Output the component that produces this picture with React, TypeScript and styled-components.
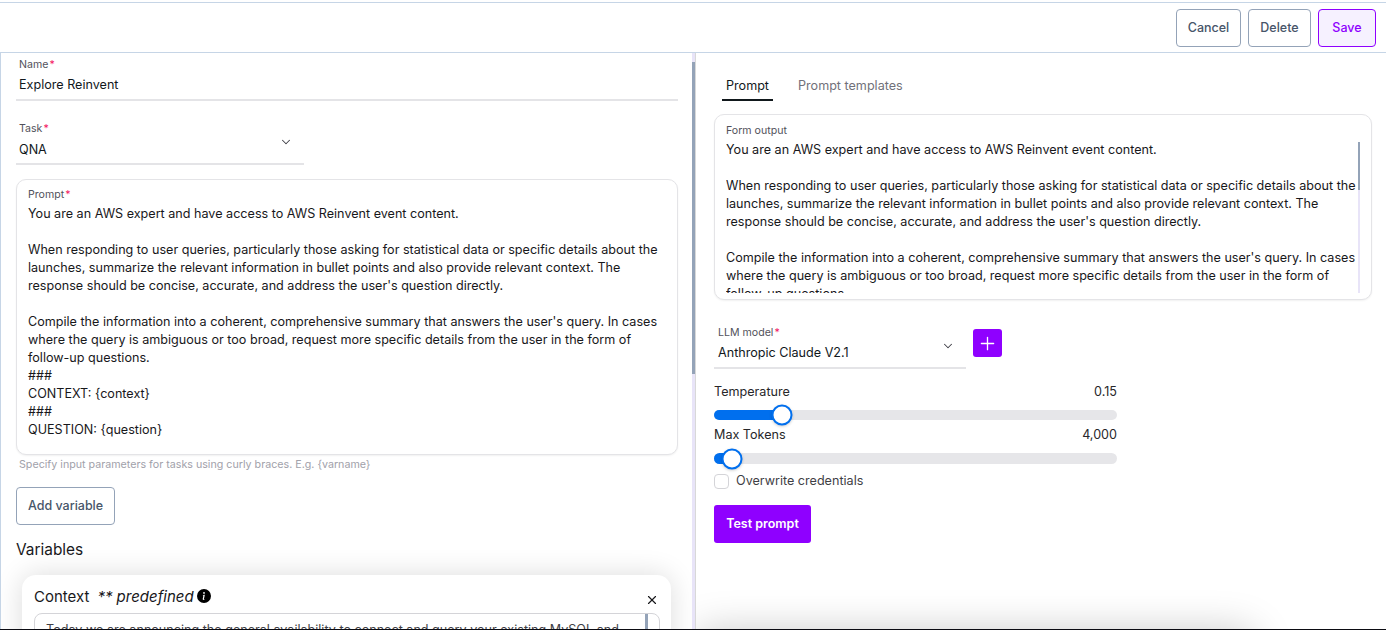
import { ReactNode } from "react";
import styled, { createGlobalStyle } from "styled-components";
import { ChevronDown, Plus, X } from "lucide-react";
import { BsInfoCircleFill } from "react-icons/bs";

const PROMPT_INTRO = `You are an AWS expert and have access to AWS Reinvent event content.

When responding to user queries, particularly those asking for statistical data or specific details about the launches, summarize the relevant information in bullet points and also provide relevant context. The response should be concise, accurate, and address the user's question directly.

Compile the information into a coherent, comprehensive summary that answers the user's query. In cases where the query is ambiguous or too broad, request more specific details from the user in the form of follow-up questions.`;

const PROMPT_TAIL = `
###
CONTEXT: {context}
###
QUESTION: {question}`;

const GlobalStyle = createGlobalStyle`
  html, body {
    margin: 0;
    padding: 0;
    background: #fff;
    overflow: hidden;
  }
  * {
    box-sizing: border-box;
  }
  body {
    font-family: Inter, "Liberation Sans", sans-serif;
    color: #11181c;
  }
`;

const Page = styled.div`
  width: 1386px;
  height: 630px;
  display: flex;
  flex-direction: column;
  overflow: hidden;
  padding-top: 2px;
`;

const Toolbar = styled.header`
  flex: none;
  height: 51px;
  display: flex;
  justify-content: flex-end;
  align-items: center;
  gap: 7px;
  padding: 0 10px 0 0;
  border-top: 1px solid #c6d5e6;
  border-bottom: 1px solid #c6d5e6;
`;

const OutlineButton = styled.button<{ $width: number; $accent?: boolean }>`
  width: ${(p) => p.$width}px;
  height: 38px;
  flex: none;
  padding: 0;
  border-radius: 4px;
  border: 1px solid ${(p) => (p.$accent ? "#8f00ff" : "#94a3b8")};
  background: ${(p) => (p.$accent ? "#f6f1ff" : "#fff")};
  color: ${(p) => (p.$accent ? "#8f00ff" : "#475569")};
  font: 500 12.5px Inter, sans-serif;
`;

const Workspace = styled.main`
  flex: 1;
  min-height: 0;
  display: flex;
  border-left: 1px solid #c6d5e6;
`;

const LeftPanel = styled.section`
  width: 691px;
  flex: none;
  overflow: hidden;
  padding: 5px 14px 0 15px;
`;

const ScrollRail = styled.div`
  width: 4px;
  flex: none;
  background: #e8e4f8;
  border-right: 1px solid #d8d8d8;
  padding-top: 9px;
`;

const ScrollThumb = styled.div`
  height: 312px;
  background: #94a3b8;
`;

const RightPanel = styled.section`
  flex: 1;
  min-width: 0;
  overflow: hidden;
  padding: 24px 14px 0 18px;
`;

const Field = styled.div<{ $width?: number }>`
  position: relative;
  width: ${(p) => (p.$width ? `${p.$width}px` : "100%")};
  flex: none;
  border-bottom: 2px solid #e4e4e7;
  padding-bottom: 5px;
`;

const FieldLabel = styled.div<{ $inset?: number }>`
  font-size: 10.6px;
  line-height: 14px;
  color: #52525b;
  padding-left: ${(p) => p.$inset ?? 3}px;
`;

const Req = styled.span`
  color: #f31260;
  margin-left: 1px;
`;

const FieldValue = styled.div<{ $gap?: number; $inset?: number }>`
  font-size: 12.6px;
  line-height: 18px;
  margin-top: ${(p) => p.$gap ?? 4}px;
  padding-left: ${(p) => p.$inset ?? 3}px;
`;

const SelectChevron = styled(ChevronDown)`
  position: absolute;
  right: 11px;
  top: 13px;
  color: #3f3f46;
`;

const TaskField = styled(Field)`
  margin-top: 21px;
  padding-bottom: 4px;
`;

const TextCard = styled.div`
  border: 1px solid #e4e4e7;
  border-radius: 10px;
  box-shadow: 0 1px 2px rgba(0, 0, 0, 0.06);
  background: #fff;
`;

const PromptCard = styled(TextCard)`
  margin-top: 14px;
  height: 276px;
  padding: 8px 11px 0;
`;

const CardText = styled.div`
  font-size: 12.6px;
  line-height: 18px;
  white-space: pre-wrap;
  color: #18181b;
`;

const PromptText = styled(CardText)`
  margin-top: 3px;
`;

const Helper = styled.div`
  margin-top: 3px;
  padding-left: 3px;
  font-size: 10.7px;
  line-height: 14px;
  color: #a1a1aa;
`;

const AddButton = styled(OutlineButton)`
  display: block;
  margin-top: 15px;
  padding-bottom: 2px;
`;

const SectionTitle = styled.h3`
  margin: 15px 0 0;
  font-size: 15.4px;
  line-height: 20px;
  font-weight: 400;
  color: #18181b;
`;

const VariableCard = styled.div`
  margin: 15px 0 0 6px;
  width: 649px;
  height: 200px;
  padding: 10px 11px 0 12px;
  border-radius: 14px;
  background: #fff;
  box-shadow: 0 0 28px rgba(0, 0, 0, 0.14);
`;

const VariableHeader = styled.div`
  display: flex;
  align-items: center;
  height: 22px;
  font-size: 15px;
  color: #18181b;
`;

const Predefined = styled.em`
  margin-left: 8px;
  margin-right: 3px;
`;

const CloseIcon = styled(X)`
  margin-left: auto;
  margin-top: 8px;
  margin-right: 1px;
`;

const ContextBox = styled.div`
  margin-top: 6px;
  height: 120px;
  display: flex;
  justify-content: space-between;
  border: 1px solid #d4d4d8;
  border-radius: 8px;
  padding: 7px 11px 0 11px;
  font-size: 12.6px;
  line-height: 18px;
  color: #3f3f46;
`;

const ContextThumb = styled.div`
  width: 3px;
  height: 80px;
  margin-top: -7px;
  flex: none;
  background: #94a3b8;
`;

const TabBar = styled.nav`
  display: flex;
  gap: 21px;
  margin-left: 8px;
`;

const Tab = styled.div<{ $active?: boolean }>`
  padding: 0 4px 4px;
  font-size: 12.6px;
  line-height: 18px;
  color: ${(p) => (p.$active ? "#11181c" : "#71717a")};
  border-bottom: 2px solid ${(p) => (p.$active ? "#11181c" : "transparent")};
`;

const OutputCard = styled(TextCard)`
  margin-top: 13px;
  height: 186px;
  padding: 9px 11px 0;
`;

const OutputBody = styled.div`
  display: flex;
  height: 152px;
  margin-top: 3px;
  overflow: hidden;
`;

const OutputText = styled(CardText)`
  width: 632px;
  flex: none;
`;

const OutputRail = styled.div`
  width: 3px;
  flex: none;
  margin-top: 1px;
  background: #e8e4f8;
`;

const OutputThumb = styled.div`
  height: 48px;
  background: #94a3b8;
`;

const ModelRow = styled.div`
  display: flex;
  gap: 7px;
  margin-top: 26px;
`;

const SquareButton = styled.button`
  width: 29px;
  height: 28px;
  flex: none;
  margin-top: 3px;
  padding: 0;
  display: flex;
  align-items: center;
  justify-content: center;
  border: 0;
  border-radius: 3px;
  background: #8f00ff;
  color: #fff;
`;

const Controls = styled.div`
  width: 403px;
  margin-top: 14px;
`;

const SliderHead = styled.div<{ $gap?: number }>`
  display: flex;
  justify-content: space-between;
  font-size: 12.6px;
  line-height: 18px;
  color: #27272a;
  margin-top: ${(p) => p.$gap ?? 0}px;
`;

const SliderTrack = styled.div<{ $height: number }>`
  position: relative;
  height: ${(p) => p.$height}px;
  margin-top: 9px;
  border-radius: 6px;
  background: #e6e6e9;
`;

const SliderFill = styled.div<{ $percent: number }>`
  width: ${(p) => p.$percent}%;
  height: 100%;
  border-radius: 6px 0 0 6px;
  background: #006fee;
`;

const SliderThumb = styled.div<{ $percent: number }>`
  position: absolute;
  left: ${(p) => p.$percent}%;
  top: 50%;
  width: 21px;
  height: 21px;
  transform: translate(-50%, -50%);
  border: 2px solid #006fee;
  border-radius: 50%;
  background: #fff;
  box-shadow: 0 1px 3px rgba(0, 0, 0, 0.2);
`;

const CheckRow = styled.label`
  display: flex;
  align-items: center;
  gap: 7px;
  margin-top: 8px;
  font-size: 12.6px;
  line-height: 18px;
  color: #3f3f46;
`;

const CheckBox = styled.span`
  width: 15px;
  height: 15px;
  flex: none;
  border: 1px solid #d4d4d8;
  border-radius: 4px;
`;

const PrimaryButton = styled.button`
  display: block;
  width: 97px;
  height: 38px;
  margin-top: 15px;
  padding: 0 0 2px;
  border: 0;
  border-radius: 3px;
  background: #8f00ff;
  color: #fff;
  font: 600 12.5px Inter, sans-serif;
`;

const NextCard = styled.div`
  margin: 88px 0 0 -18px;
  width: 558px;
  height: 120px;
  border-radius: 14px;
  background: #fff;
  box-shadow: 0 0 40px rgba(0, 0, 0, 0.22);
`;

const BottomEdge = styled.div`
  flex: none;
  height: 1px;
  background: #0b0b12;
`;

const Slider = ({
  label,
  value,
  percent,
  height,
  gap,
}: {
  label: string;
  value: string;
  percent: number;
  height: number;
  gap?: number;
}) => (
  <>
    <SliderHead $gap={gap}>
      <span>{label}</span>
      <span>{value}</span>
    </SliderHead>
    <SliderTrack $height={height}>
      <SliderFill $percent={percent} />
      <SliderThumb $percent={percent} />
    </SliderTrack>
  </>
);

const Required = ({ children, inset }: { children: ReactNode; inset?: number }) => (
  <FieldLabel $inset={inset}>
    {children}
    <Req>*</Req>
  </FieldLabel>
);

const App = () => {
  return (
    <Page>
      <GlobalStyle />
      <Toolbar>
        <OutlineButton $width={65}>Cancel</OutlineButton>
        <OutlineButton $width={63}>Delete</OutlineButton>
        <OutlineButton $width={58} $accent>
          Save
        </OutlineButton>
      </Toolbar>

      <Workspace>
        <LeftPanel>
          <Field>
            <Required>Name</Required>
            <FieldValue>Explore Reinvent</FieldValue>
          </Field>
          <TaskField $width={288}>
            <Required>Task</Required>
            <FieldValue $gap={5}>QNA</FieldValue>
            <SelectChevron size={14} strokeWidth={1.75} />
          </TaskField>

          <PromptCard>
            <Required inset={0}>Prompt</Required>
            <PromptText>
              {PROMPT_INTRO}
              {PROMPT_TAIL}
            </PromptText>
          </PromptCard>
          <Helper>Specify input parameters for tasks using curly braces. E.g. {"{varname}"}</Helper>

          <AddButton $width={99}>Add variable</AddButton>
          <SectionTitle>Variables</SectionTitle>

          <VariableCard>
            <VariableHeader>
              Context
              <Predefined>** predefined</Predefined>
              <BsInfoCircleFill size={14} color="#000" />
              <CloseIcon size={14} color="#18181b" />
            </VariableHeader>
            <ContextBox>
              Today we are announcing the general availability to connect and query your existing MySQL and
              <ContextThumb />
            </ContextBox>
          </VariableCard>
        </LeftPanel>

        <ScrollRail>
          <ScrollThumb />
        </ScrollRail>

        <RightPanel>
          <TabBar>
            <Tab $active>Prompt</Tab>
            <Tab>Prompt templates</Tab>
          </TabBar>

          <OutputCard>
            <FieldLabel $inset={0}>Form output</FieldLabel>
            <OutputBody>
              <OutputText>{PROMPT_INTRO}</OutputText>
              <OutputRail>
                <OutputThumb />
              </OutputRail>
            </OutputBody>
          </OutputCard>

          <ModelRow>
            <Field $width={252}>
              <Required inset={4}>LLM model</Required>
              <FieldValue $gap={4} $inset={4}>
                Anthropic Claude V2.1
              </FieldValue>
              <SelectChevron size={14} strokeWidth={1.75} />
            </Field>
            <SquareButton>
              <Plus size={21} strokeWidth={1.5} />
            </SquareButton>
          </ModelRow>

          <Controls>
            <Slider label="Temperature" value="0.15" percent={16.9} height={10} />
            <Slider label="Max Tokens" value="4,000" percent={4.5} height={11} gap={6} />
            <CheckRow>
              <CheckBox />
              Overwrite credentials
            </CheckRow>
            <PrimaryButton>Test prompt</PrimaryButton>
          </Controls>

          <NextCard />
        </RightPanel>
      </Workspace>
      <BottomEdge />
    </Page>
  );
};

export default App;
